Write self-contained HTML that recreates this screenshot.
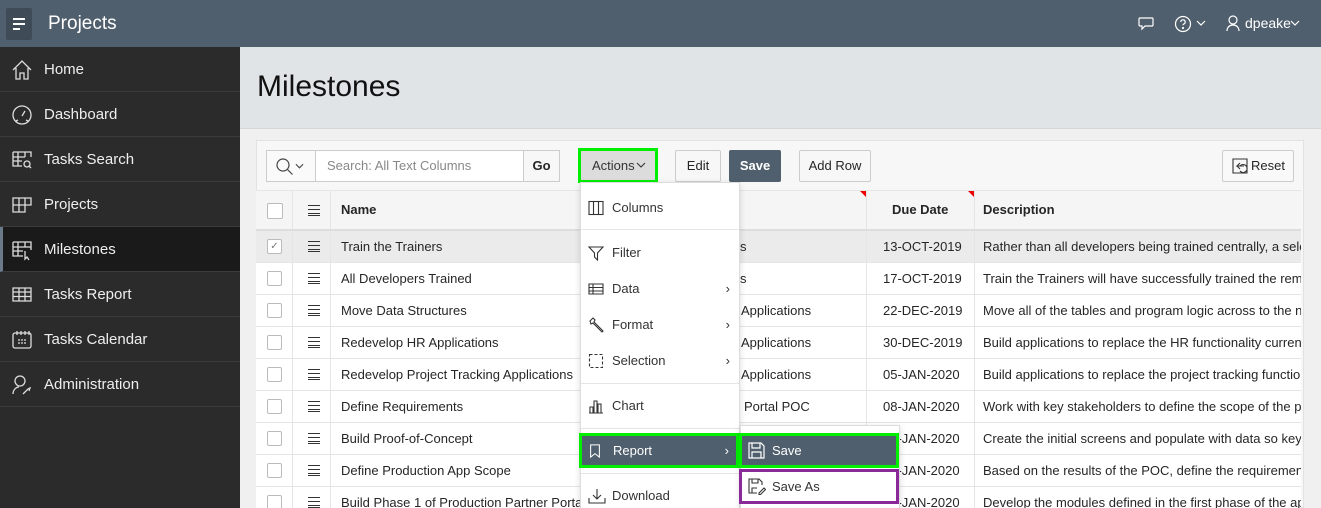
<!DOCTYPE html>
<html><head><meta charset="utf-8"><style>
*{box-sizing:border-box;margin:0;padding:0}
html,body{width:1321px;height:508px;overflow:hidden}
body{font-family:"Liberation Sans",sans-serif;font-size:13px;color:#262626;background:#f0f0f0;position:relative}
.a{position:absolute}
.hdr{left:0;top:0;width:1321px;height:47px;background:#505f6d;color:#fff}
.side{left:0;top:47px;width:240px;height:461px;background:#2b2b2b}
.ni{position:absolute;left:0;width:240px;height:45px;border-bottom:1px solid #3c3c3c;color:#eee;font-size:15px;line-height:45px;padding-left:44px}
.ni svg{position:absolute;left:11px;top:12px}
.tr{position:absolute;left:256px;width:1045px;height:32px;border-bottom:1px solid #e5e5e5;background:#fff}
.cb{position:absolute;left:11px;top:8px;width:15px;height:15px;border:1px solid #bbb;background:#fff;border-radius:2px}
.hm{position:absolute;left:52px;top:10px;width:12px;height:11px;border-top:1.5px solid #333;border-bottom:1.5px solid #333}
.hm:after{content:"";position:absolute;left:0;right:0;top:3px;height:3px;border-top:1.5px solid #333;border-bottom:1.5px solid #333}
.c{position:absolute;top:0;line-height:31px;white-space:nowrap;overflow:hidden}
.vl{position:absolute;top:0;bottom:0;width:1px;background:#e5e5e5}
.mi{position:absolute;left:580px;width:160px;height:35px;line-height:35px;padding-left:32px;font-size:13px;color:#333}
.mi svg{position:absolute;left:8px;top:10px}
.ar{position:absolute;right:10px;top:0;font-size:13px}
.btn{position:absolute;top:150px;height:32px;line-height:30px;border:1px solid #ccc;background:#f7f7f7;border-radius:2px;text-align:center;font-size:13px}
</style></head><body>
<div class="a hdr">
 <div class="a" style="left:6px;top:8px;width:26px;height:32px;background:#3f4c58;border-radius:2px"></div>
 <div class="a" style="left:13px;top:18px;width:12px;height:2px;background:#fff"></div>
 <div class="a" style="left:13px;top:23px;width:12px;height:2px;background:#fff"></div>
 <div class="a" style="left:13px;top:28px;width:7px;height:2px;background:#fff"></div>
 <div class="a" style="left:48px;top:13px;font-size:19px">Projects</div>
 <svg class="a" style="left:1137px;top:15px" width="18" height="18" viewBox="0 0 18 18" fill="none" stroke="#fff" stroke-width="1.2"><path d="M3 3h12a1 1 0 0 1 1 1v6a1 1 0 0 1-1 1H8l-3 3v-3H3a1 1 0 0 1-1-1V4a1 1 0 0 1 1-1z"/></svg>
 <svg class="a" style="left:1174px;top:15px" width="18" height="18" viewBox="0 0 18 18" fill="none" stroke="#fff" stroke-width="1.2"><circle cx="9" cy="9" r="7.5"/><path d="M6.8 7a2.2 2.2 0 1 1 2.9 2.1c-.5.2-.7.6-.7 1.2"/><circle cx="9" cy="13" r=".5" fill="#fff"/></svg>
 <svg class="a" style="left:1196px;top:20px" width="10" height="6" viewBox="0 0 10 6" fill="none" stroke="#fff" stroke-width="1.2"><path d="M1 1l4 4 4-4"/></svg>
 <svg class="a" style="left:1226px;top:15px" width="14" height="17" viewBox="0 0 14 17" fill="none" stroke="#fff" stroke-width="1.2"><circle cx="7" cy="5" r="4"/><path d="M1 16c0-4 3-6 6-6s6 2 6 6"/></svg>
 <div class="a" style="left:1245px;top:15px;font-size:14px">dpeake</div>
 <svg class="a" style="left:1290px;top:20px" width="10" height="6" viewBox="0 0 10 6" fill="none" stroke="#fff" stroke-width="1.2"><path d="M1 1l4 4 4-4"/></svg>
</div>
<div class="a side">
 <div class="ni" style="top:0"><svg width="22" height="22" viewBox="0 0 22 22" fill="none" stroke="#ddd" stroke-width="1.3"><path d="M2 11L11 2l9 9M5 9v11h4v-6h4v6h4V9"/></svg>Home</div>
 <div class="ni" style="top:45px"><svg width="22" height="22" viewBox="0 0 22 22" fill="none" stroke="#ddd" stroke-width="1.3"><circle cx="11" cy="11" r="9"/><path d="M11 12l3-5M5 17l2-1M17 17l-2-1"/></svg>Dashboard</div>
 <div class="ni" style="top:90px"><svg width="22" height="22" viewBox="0 0 22 22" fill="none" stroke="#ddd" stroke-width="1.3"><path d="M2 3h18v5M2 3v14h9M2 8h12M2 12h9M7 3v14M14 3v5"/><circle cx="16" cy="15" r="3"/><path d="M18 17l2 2"/></svg>Tasks Search</div>
 <div class="ni" style="top:135px"><svg width="22" height="22" viewBox="0 0 22 22" fill="none" stroke="#ddd" stroke-width="1.3"><path d="M2 4h18v7h-6v7H2zM2 11h12M8 4v14M14 4v7"/></svg>Projects</div>
 <div class="ni" style="top:180px;background:#1a1a1a;border-left:3px solid #6a7a88;padding-left:41px"><svg style="left:8px" width="22" height="22" viewBox="0 0 22 22" fill="none" stroke="#ddd" stroke-width="1.3"><path d="M2 3h18v8M2 3v14h10M2 8h18M2 12h10M7 3v14M14 3v5"/><path d="M14 12v8l2-2 2 3" /></svg>Milestones</div>
 <div class="ni" style="top:225px"><svg width="22" height="22" viewBox="0 0 22 22" fill="none" stroke="#ddd" stroke-width="1.3"><path d="M2 4h18v13H2zM2 8h18M2 12.5h18M8 4v13M14 4v13"/></svg>Tasks Report</div>
 <div class="ni" style="top:270px"><svg width="22" height="22" viewBox="0 0 22 22" fill="none" stroke="#ddd" stroke-width="1.3"><rect x="2" y="4" width="18" height="15" rx="2"/><path d="M6 2v4M10 2v4M14 2v4M18 2v4M7 11h2M10 11h2M13 11h2M7 14h2M10 14h2M13 14h2"/></svg>Tasks Calendar</div>
 <div class="ni" style="top:315px"><svg width="22" height="22" viewBox="0 0 22 22" fill="none" stroke="#ddd" stroke-width="1.3"><circle cx="9" cy="7" r="5"/><path d="M2 20c0-4 3-7 6-7M12 20l5-5m0 0l2-1-1 3"/></svg>Administration</div>
</div>
<div class="a" style="left:240px;top:47px;width:1081px;height:82px;background:#e1e4e7;border-bottom:1px solid #d5d8db"></div>
<div class="a" style="left:257px;top:70px;font-size:30px;color:#111">Milestones</div>
<div class="a" style="left:256px;top:140px;width:1048px;height:368px;background:#f7f7f7;border:1px solid #e2e2e2"></div>
<div class="a" style="left:266px;top:150px;width:294px;height:32px;border:1px solid #ccc;background:#fff;border-radius:2px"></div>
<div class="a" style="left:266px;top:150px;width:50px;height:32px;border:1px solid #ccc;background:#fafafa"></div>
<svg class="a" style="left:275px;top:157px" width="20" height="20" viewBox="0 0 20 20" fill="none" stroke="#444" stroke-width="1.2"><circle cx="8" cy="8" r="6"/><path d="M12.5 12.5l5 5"/></svg>
<svg class="a" style="left:295px;top:163px" width="9" height="6" viewBox="0 0 10 6" fill="none" stroke="#444" stroke-width="1.2"><path d="M1 1l4 4 4-4"/></svg>
<div class="a" style="left:327px;top:158px;color:#888">Search: All Text Columns</div>
<div class="a" style="left:523px;top:150px;width:37px;height:32px;border:1px solid #ccc;background:#f7f7f7;text-align:center;line-height:30px;font-weight:bold">Go</div>
<div class="a" style="left:578px;top:148px;width:80px;height:35px;border:3px solid #00ee00;background:#dcdcdc;line-height:29px;color:#333;padding-left:11px">Actions</div>
<svg class="a" style="left:636px;top:162px" width="10" height="6" viewBox="0 0 10 6" fill="none" stroke="#333" stroke-width="1.1"><path d="M1 1l4 4 4-4"/></svg>
<div class="btn" style="left:675px;width:46px">Edit</div>
<div class="btn" style="left:729px;width:52px;background:#505f6d;color:#fff;font-weight:bold;border-color:#505f6d">Save</div>
<div class="btn" style="left:799px;width:72px">Add Row</div>
<div class="btn" style="left:1222px;width:72px;padding-left:20px;background:#f9f9f9">Reset</div>
<svg class="a" style="left:1231px;top:157px" width="18" height="18" viewBox="0 0 18 18" fill="none" stroke="#333" stroke-width="1.1"><path d="M2 2h14v14H2zM2 5v8M13 9H6l3-3M6 9l3 3M9 9a4 4 0 1 1 0 5"/></svg>
<div class="a" style="left:256px;top:190px;width:1045px;height:41px;background:#f5f5f5;border-bottom:2px solid #ddd;border-top:1px solid #e5e5e5">
 <div class="cb" style="top:12px;width:16px;height:16px"></div><div class="hm" style="top:14px"></div>
 <div class="vl" style="left:36px"></div><div class="vl" style="left:74px"></div><div class="vl" style="left:610px"></div><div class="vl" style="left:718px"></div>
 <div class="c" style="left:85px;line-height:38px;font-weight:bold">Name</div>
 <div class="c" style="left:636px;line-height:38px;font-weight:bold">Due Date</div>
 <div class="c" style="left:727px;line-height:38px;font-weight:bold">Description</div>
 <div class="a" style="left:604px;top:0;width:0;height:0;border-left:6px solid transparent;border-top:6px solid #e00"></div>
 <div class="a" style="left:712px;top:0;width:0;height:0;border-left:6px solid transparent;border-top:6px solid #e00"></div>
</div>
<div class="tr" style="top:231px;background:#ebebeb"><div class="cb" style="color:#777;font-size:10px;line-height:13px;text-align:center">&#10003;</div><div class="hm"></div><div class="vl" style="left:36px"></div><div class="vl" style="left:74px"></div><div class="vl" style="left:610px"></div><div class="vl" style="left:718px"></div><div class="c" style="left:85px">Train the Trainers</div><div class="c" style="left:484px">s</div><div class="c" style="left:627px">13-OCT-2019</div><div class="c" style="left:727px;width:318px">Rather than all developers being trained centrally, a select group</div></div>
<div class="tr" style="top:263px"><div class="cb"></div><div class="hm"></div><div class="vl" style="left:36px"></div><div class="vl" style="left:74px"></div><div class="vl" style="left:610px"></div><div class="vl" style="left:718px"></div><div class="c" style="left:85px">All Developers Trained</div><div class="c" style="left:484px">s</div><div class="c" style="left:627px">17-OCT-2019</div><div class="c" style="left:727px;width:318px">Train the Trainers will have successfully trained the remaining</div></div>
<div class="tr" style="top:295px"><div class="cb"></div><div class="hm"></div><div class="vl" style="left:36px"></div><div class="vl" style="left:74px"></div><div class="vl" style="left:610px"></div><div class="vl" style="left:718px"></div><div class="c" style="left:85px">Move Data Structures</div><div class="c" style="left:485px">Applications</div><div class="c" style="left:627px">22-DEC-2019</div><div class="c" style="left:727px;width:318px">Move all of the tables and program logic across to the new</div></div>
<div class="tr" style="top:327px"><div class="cb"></div><div class="hm"></div><div class="vl" style="left:36px"></div><div class="vl" style="left:74px"></div><div class="vl" style="left:610px"></div><div class="vl" style="left:718px"></div><div class="c" style="left:85px">Redevelop HR Applications</div><div class="c" style="left:485px">Applications</div><div class="c" style="left:627px">30-DEC-2019</div><div class="c" style="left:727px;width:318px">Build applications to replace the HR functionality currently</div></div>
<div class="tr" style="top:359px"><div class="cb"></div><div class="hm"></div><div class="vl" style="left:36px"></div><div class="vl" style="left:74px"></div><div class="vl" style="left:610px"></div><div class="vl" style="left:718px"></div><div class="c" style="left:85px">Redevelop Project Tracking Applications</div><div class="c" style="left:485px">Applications</div><div class="c" style="left:627px">05-JAN-2020</div><div class="c" style="left:727px;width:318px">Build applications to replace the project tracking functionality</div></div>
<div class="tr" style="top:391px"><div class="cb"></div><div class="hm"></div><div class="vl" style="left:36px"></div><div class="vl" style="left:74px"></div><div class="vl" style="left:610px"></div><div class="vl" style="left:718px"></div><div class="c" style="left:85px">Define Requirements</div><div class="c" style="left:488px">Portal POC</div><div class="c" style="left:627px">08-JAN-2020</div><div class="c" style="left:727px;width:318px">Work with key stakeholders to define the scope of the project</div></div>
<div class="tr" style="top:423px"><div class="cb"></div><div class="hm"></div><div class="vl" style="left:36px"></div><div class="vl" style="left:74px"></div><div class="vl" style="left:610px"></div><div class="vl" style="left:718px"></div><div class="c" style="left:85px">Build Proof-of-Concept</div><div class="c" style="left:627px">15-JAN-2020</div><div class="c" style="left:727px;width:318px">Create the initial screens and populate with data so key</div></div>
<div class="tr" style="top:455px"><div class="cb"></div><div class="hm"></div><div class="vl" style="left:36px"></div><div class="vl" style="left:74px"></div><div class="vl" style="left:610px"></div><div class="vl" style="left:718px"></div><div class="c" style="left:85px">Define Production App Scope</div><div class="c" style="left:627px">20-JAN-2020</div><div class="c" style="left:727px;width:318px">Based on the results of the POC, define the requirements for</div></div>
<div class="tr" style="top:487px"><div class="cb"></div><div class="hm"></div><div class="vl" style="left:36px"></div><div class="vl" style="left:74px"></div><div class="vl" style="left:610px"></div><div class="vl" style="left:718px"></div><div class="c" style="left:85px">Build Phase 1 of Production Partner Portal</div><div class="c" style="left:627px">29-JAN-2020</div><div class="c" style="left:727px;width:318px">Develop the modules defined in the first phase of the application</div></div>
<div class="a" style="left:580px;top:182px;width:160px;height:330px;background:#fff;border:1px solid #ddd;box-shadow:0 2px 6px rgba(0,0,0,.15)"></div>
<div class="a" style="left:581px;top:229px;width:158px;height:1px;background:#e5e5e5"></div>
<div class="a" style="left:581px;top:383px;width:158px;height:1px;background:#e5e5e5"></div>
<div class="a" style="left:581px;top:428px;width:158px;height:1px;background:#e5e5e5"></div>
<div class="a" style="left:581px;top:473px;width:158px;height:1px;background:#e5e5e5"></div>
<div class="mi" style="top:190px"><svg width="16" height="16" viewBox="0 0 16 16" fill="none" stroke="#333" stroke-width="1.1"><rect x="1" y="1.5" width="14" height="13"/><path d="M5.5 1.5v13M10.5 1.5v13"/></svg>Columns</div>
<div class="mi" style="top:235px"><svg width="16" height="16" viewBox="0 0 16 16" fill="none" stroke="#333" stroke-width="1.1"><path d="M1 2h14l-5.5 6v7l-3-3V8z"/></svg>Filter</div>
<div class="mi" style="top:271px"><svg width="16" height="16" viewBox="0 0 16 16" fill="none" stroke="#333" stroke-width="1.1"><path d="M1 3h14v10H1zM1 6.5h14M1 10h14M5 3v10"/></svg>Data<span class="ar">&#8250;</span></div>
<div class="mi" style="top:307px"><svg width="16" height="16" viewBox="0 0 16 16" fill="none" stroke="#333" stroke-width="1.1"><path d="M2 4l3-3 2 2-1 2 9 9-1 1-9-9-2 1z"/></svg>Format<span class="ar">&#8250;</span></div>
<div class="mi" style="top:343px"><svg width="16" height="16" viewBox="0 0 16 16" fill="none" stroke="#333" stroke-width="1.1" stroke-dasharray="3 2"><rect x="1.5" y="1.5" width="13" height="13"/></svg>Selection<span class="ar">&#8250;</span></div>
<div class="mi" style="top:388px"><svg width="16" height="16" viewBox="0 0 16 16" fill="none" stroke="#333" stroke-width="1.1"><path d="M1 15h14M2 15V9h3v6M6 15V3h3v12M10 15V6h3v9"/></svg>Chart</div>
<div class="mi" style="top:433px;background:#505f6d;color:#fff;border:3px solid #00ee00;left:579px;width:160px;line-height:29px;padding-left:31px"><svg style="left:6px;top:8px" width="14" height="14" viewBox="0 0 16 16" fill="none" stroke="#fff" stroke-width="1.2"><path d="M3 1h10v14l-5-4-5 4z"/></svg>Report<span class="ar" style="right:7px">&#8250;</span></div>
<div class="mi" style="top:478px"><svg width="18" height="16" viewBox="0 0 18 16" fill="none" stroke="#333" stroke-width="1.1"><path d="M1 10v5h16v-5M9 1v10M5 7l4 4 4-4"/></svg>Download</div>
<div class="a" style="left:740px;top:425px;width:160px;height:90px;background:#fff;border:1px solid #ddd;box-shadow:0 2px 6px rgba(0,0,0,.15)"></div>
<div class="a" style="left:739px;top:433px;width:160px;height:35px;background:#505f6d;border:3px solid #00ee00;color:#fff;line-height:29px;padding-left:30px">Save</div>
<svg class="a" style="left:748px;top:442px" width="17" height="17" viewBox="0 0 17 17" fill="none" stroke="#fff" stroke-width="1.2"><path d="M1 1h12l3 3v12H1zM4 1v5h8V1M4 16v-6h9v6"/></svg>
<div class="a" style="left:739px;top:469px;width:160px;height:35px;background:#fff;border:3px solid #8a2a9a;line-height:29px;padding-left:30px;color:#333">Save As</div>
<svg class="a" style="left:748px;top:478px" width="18" height="17" viewBox="0 0 18 17" fill="none" stroke="#333" stroke-width="1.1"><path d="M9 15H1V1h10l3 3v3M4 1v4h6V1M4 15v-5h5M11 15l5-5 1.5 1.5-5 5H11z"/></svg>
</body></html>
